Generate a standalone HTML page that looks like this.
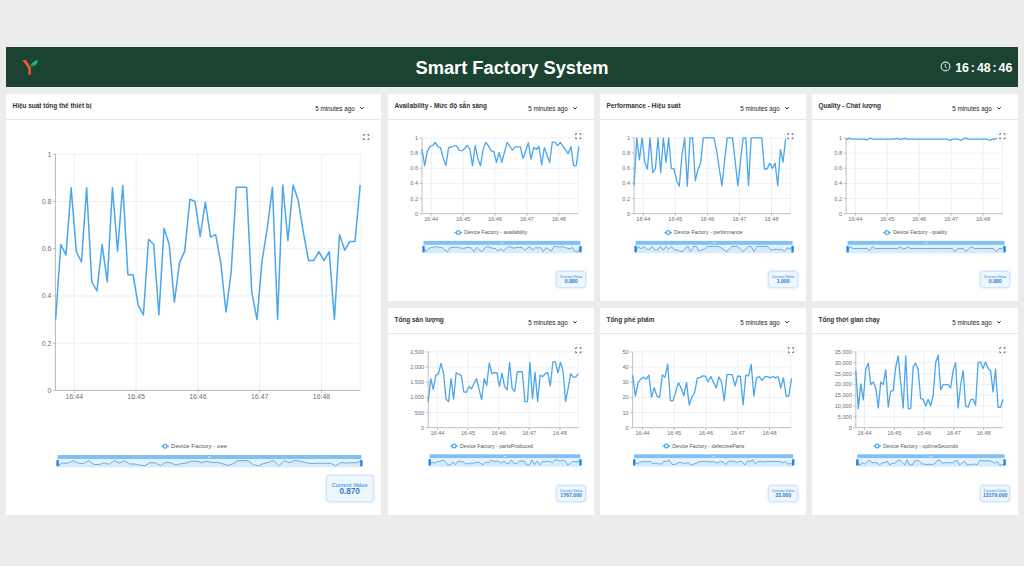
<!DOCTYPE html>
<html><head><meta charset="utf-8"><title>Smart Factory System</title>
<style>
*{box-sizing:border-box;margin:0;padding:0}
html,body{width:1024px;height:566px;overflow:hidden;background:#ececec;font-family:"Liberation Sans",sans-serif}
.hdr{position:absolute;left:6px;top:47px;width:1012px;height:39.6px;background:#1b4332}
.ttl{position:absolute;left:0;right:0;top:10.8px;text-align:center;color:#fff;font-weight:bold;font-size:18.3px;line-height:20px}
.clk{position:absolute;right:5.6px;top:13.5px;color:#fff;font-weight:bold;font-size:12.4px;line-height:14px}
.clk i{font-style:normal;margin:0 1.9px}
.pn{position:absolute;background:#fff}
.pt{position:absolute;left:6.5px;top:7.1px;font-size:6.45px;font-weight:bold;color:#2b3530;line-height:9px;white-space:nowrap}
.pr{position:absolute;right:26.3px;top:10.8px;font-size:6.3px;color:#222;line-height:8px;white-space:nowrap}
.dv{position:absolute;left:0;right:0;top:25px;height:0.7px;background:#e4e6e8}
.cv{position:absolute;border:1px solid #cfe4fb;background:#eef6fe;border-radius:4px;text-align:center;box-shadow:0 0 2.5px rgba(110,175,240,.45)}
.cv .a{color:#5aa3ec;white-space:nowrap;font-weight:bold}
.cv .b{color:#3478cf;font-weight:bold;white-space:nowrap}
svg{position:absolute;left:0;top:0}
</style></head><body>
<div class="hdr">
<svg width="30" height="30" viewBox="0 0 30 30" style="left:14px;top:10px">
<path d="M2.2,3.1 L5.9,3.1 C7.6,5.6 9.6,8.2 10.9,11.2 L10.9,17.2 C10.9,17.6 10.6,17.8 10.2,17.8 L9,17.8 C8.6,17.8 8.4,17.6 8.4,17.2 L8.4,12.2 C6.8,9.2 4.4,6.2 2.2,3.1 Z" fill="#f15a29"/>
<path d="M10.2,10.6 C10.8,6.6 13.6,3.9 17.9,3.0 C17.6,6.6 15.2,9.1 11.6,9.6 C12.6,8.4 13.6,7.4 14.8,6.6 C13.2,7.2 11.6,8.6 10.2,10.6 Z" fill="#1fbe6c"/>
</svg>
<div class="ttl">Smart Factory System</div>
<div class="clk"><svg width="11" height="11" viewBox="0 0 11 11" style="position:relative;display:inline-block;vertical-align:-1.5px;left:auto;top:auto;margin-right:4.5px;vertical-align:-0.9px"><circle cx="5.5" cy="5.5" r="4.4" fill="none" stroke="#d8dfdb" stroke-width="1.1"/><path d="M5.3,3 L5.3,5.8 L7,7.2" fill="none" stroke="#d8dfdb" stroke-width="1"/></svg>16<i>:</i>48<i>:</i>46</div>
</div>

<div class="pn" style="left:6px;top:94px;width:375px;height:421px"><div class="pt">Hiệu suất tổng thể thiết bị</div><div class="pr">5 minutes ago</div><svg width="6" height="5" viewBox="0 0 6 5" style="left:353.2px;top:12.4px"><path d="M1.2,1.2 L3,3 L4.8,1.2" fill="none" stroke="#3a3a3a" stroke-width="1"/></svg><div class="dv"></div></div>
<div class="pn" style="left:388px;top:94px;width:206px;height:207px"><div class="pt">Availability - Mức độ sẵn sàng</div><div class="pr">5 minutes ago</div><svg width="6" height="5" viewBox="0 0 6 5" style="left:184.2px;top:12.4px"><path d="M1.2,1.2 L3,3 L4.8,1.2" fill="none" stroke="#3a3a3a" stroke-width="1"/></svg><div class="dv"></div></div>
<div class="pn" style="left:600px;top:94px;width:206px;height:207px"><div class="pt">Performance - Hiệu suất</div><div class="pr">5 minutes ago</div><svg width="6" height="5" viewBox="0 0 6 5" style="left:184.2px;top:12.4px"><path d="M1.2,1.2 L3,3 L4.8,1.2" fill="none" stroke="#3a3a3a" stroke-width="1"/></svg><div class="dv"></div></div>
<div class="pn" style="left:812px;top:94px;width:206px;height:207px"><div class="pt">Quality - Chất lượng</div><div class="pr">5 minutes ago</div><svg width="6" height="5" viewBox="0 0 6 5" style="left:184.2px;top:12.4px"><path d="M1.2,1.2 L3,3 L4.8,1.2" fill="none" stroke="#3a3a3a" stroke-width="1"/></svg><div class="dv"></div></div>
<div class="pn" style="left:388px;top:308px;width:206px;height:207px"><div class="pt">Tổng sản lượng</div><div class="pr">5 minutes ago</div><svg width="6" height="5" viewBox="0 0 6 5" style="left:184.2px;top:12.4px"><path d="M1.2,1.2 L3,3 L4.8,1.2" fill="none" stroke="#3a3a3a" stroke-width="1"/></svg><div class="dv"></div></div>
<div class="pn" style="left:600px;top:308px;width:206px;height:207px"><div class="pt">Tổng phế phẩm</div><div class="pr">5 minutes ago</div><svg width="6" height="5" viewBox="0 0 6 5" style="left:184.2px;top:12.4px"><path d="M1.2,1.2 L3,3 L4.8,1.2" fill="none" stroke="#3a3a3a" stroke-width="1"/></svg><div class="dv"></div></div>
<div class="pn" style="left:812px;top:308px;width:206px;height:207px"><div class="pt">Tổng thời gian chạy</div><div class="pr">5 minutes ago</div><svg width="6" height="5" viewBox="0 0 6 5" style="left:184.2px;top:12.4px"><path d="M1.2,1.2 L3,3 L4.8,1.2" fill="none" stroke="#3a3a3a" stroke-width="1"/></svg><div class="dv"></div></div>
<div class="cv" style="left:325.7px;top:474.8px;width:47.9px;height:27.1px"><div class="a" style="font-size:5.5px;line-height:6px;margin-top:6.6px">Current Value</div><div class="b" style="font-size:8.2px;line-height:8px;margin-top:-0.2px">0.870</div></div>
<div class="cv" style="left:556.3px;top:270.6px;width:29.7px;height:17px"><div class="a" style="font-size:3.5px;line-height:4px;margin-top:3.3px">Current Value</div><div class="b" style="font-size:5.2px;line-height:5px;margin-top:0.3px">0.880</div></div>
<div class="cv" style="left:768.3px;top:270.6px;width:29.7px;height:17px"><div class="a" style="font-size:3.5px;line-height:4px;margin-top:3.3px">Current Value</div><div class="b" style="font-size:5.2px;line-height:5px;margin-top:0.3px">1.000</div></div>
<div class="cv" style="left:980.3px;top:270.6px;width:29.7px;height:17px"><div class="a" style="font-size:3.5px;line-height:4px;margin-top:3.3px">Current Value</div><div class="b" style="font-size:5.2px;line-height:5px;margin-top:0.3px">0.980</div></div>
<div class="cv" style="left:556.3px;top:484.6px;width:29.7px;height:17px"><div class="a" style="font-size:3.5px;line-height:4px;margin-top:3.3px">Current Value</div><div class="b" style="font-size:5.2px;line-height:5px;margin-top:0.3px">1767.000</div></div>
<div class="cv" style="left:768.3px;top:484.6px;width:29.7px;height:17px"><div class="a" style="font-size:3.5px;line-height:4px;margin-top:3.3px">Current Value</div><div class="b" style="font-size:5.2px;line-height:5px;margin-top:0.3px">33.000</div></div>
<div class="cv" style="left:980.3px;top:484.6px;width:29.7px;height:17px"><div class="a" style="font-size:3.5px;line-height:4px;margin-top:3.3px">Current Value</div><div class="b" style="font-size:5.2px;line-height:5px;margin-top:0.3px">13179.000</div></div>
<svg width="1024" height="566" viewBox="0 0 1024 566" font-family="Liberation Sans, sans-serif">
<line x1="52.9" y1="390.4" x2="55.4" y2="390.4" stroke="#9a9da4" stroke-width="0.6"/>
<text x="51.4" y="392.92" font-size="7" text-anchor="end" fill="#6e7079">0</text>
<line x1="55.4" y1="343.18" x2="360.2" y2="343.18" stroke="#e2e5ea" stroke-width="0.6"/>
<line x1="52.9" y1="343.18" x2="55.4" y2="343.18" stroke="#9a9da4" stroke-width="0.6"/>
<text x="51.4" y="345.7" font-size="7" text-anchor="end" fill="#6e7079">0.2</text>
<line x1="55.4" y1="295.96" x2="360.2" y2="295.96" stroke="#e2e5ea" stroke-width="0.6"/>
<line x1="52.9" y1="295.96" x2="55.4" y2="295.96" stroke="#9a9da4" stroke-width="0.6"/>
<text x="51.4" y="298.48" font-size="7" text-anchor="end" fill="#6e7079">0.4</text>
<line x1="55.4" y1="248.74" x2="360.2" y2="248.74" stroke="#e2e5ea" stroke-width="0.6"/>
<line x1="52.9" y1="248.74" x2="55.4" y2="248.74" stroke="#9a9da4" stroke-width="0.6"/>
<text x="51.4" y="251.26" font-size="7" text-anchor="end" fill="#6e7079">0.6</text>
<line x1="55.4" y1="201.52" x2="360.2" y2="201.52" stroke="#e2e5ea" stroke-width="0.6"/>
<line x1="52.9" y1="201.52" x2="55.4" y2="201.52" stroke="#9a9da4" stroke-width="0.6"/>
<text x="51.4" y="204.04" font-size="7" text-anchor="end" fill="#6e7079">0.8</text>
<line x1="55.4" y1="154.3" x2="360.2" y2="154.3" stroke="#e2e5ea" stroke-width="0.6"/>
<line x1="52.9" y1="154.3" x2="55.4" y2="154.3" stroke="#9a9da4" stroke-width="0.6"/>
<text x="51.4" y="156.82" font-size="7" text-anchor="end" fill="#6e7079">1</text>
<line x1="74.3" y1="154.3" x2="74.3" y2="390.4" stroke="#e2e5ea" stroke-width="0.6"/>
<line x1="74.3" y1="390.4" x2="74.3" y2="392.9" stroke="#9a9da4" stroke-width="0.6"/>
<text x="74.3" y="399" font-size="7" text-anchor="middle" fill="#6e7079">16:44</text>
<line x1="136.1" y1="154.3" x2="136.1" y2="390.4" stroke="#e2e5ea" stroke-width="0.6"/>
<line x1="136.1" y1="390.4" x2="136.1" y2="392.9" stroke="#9a9da4" stroke-width="0.6"/>
<text x="136.1" y="399" font-size="7" text-anchor="middle" fill="#6e7079">16:45</text>
<line x1="197.9" y1="154.3" x2="197.9" y2="390.4" stroke="#e2e5ea" stroke-width="0.6"/>
<line x1="197.9" y1="390.4" x2="197.9" y2="392.9" stroke="#9a9da4" stroke-width="0.6"/>
<text x="197.9" y="399" font-size="7" text-anchor="middle" fill="#6e7079">16:46</text>
<line x1="259.7" y1="154.3" x2="259.7" y2="390.4" stroke="#e2e5ea" stroke-width="0.6"/>
<line x1="259.7" y1="390.4" x2="259.7" y2="392.9" stroke="#9a9da4" stroke-width="0.6"/>
<text x="259.7" y="399" font-size="7" text-anchor="middle" fill="#6e7079">16:47</text>
<line x1="321.5" y1="154.3" x2="321.5" y2="390.4" stroke="#e2e5ea" stroke-width="0.6"/>
<line x1="321.5" y1="390.4" x2="321.5" y2="392.9" stroke="#9a9da4" stroke-width="0.6"/>
<text x="321.5" y="399" font-size="7" text-anchor="middle" fill="#6e7079">16:48</text>
<line x1="360.2" y1="154.3" x2="360.2" y2="390.4" stroke="#e2e5ea" stroke-width="0.6"/>
<line x1="55.4" y1="154.3" x2="55.4" y2="390.4" stroke="#9a9da4" stroke-width="0.75"/>
<line x1="55.4" y1="390.4" x2="360.2" y2="390.4" stroke="#9a9da4" stroke-width="0.75"/>
<polyline points="55.65,319.57 60.81,244.49 65.97,254.88 71.14,187.83 76.3,251.34 81.46,261.96 86.62,187.83 91.78,281.79 96.94,291 102.11,244.49 107.27,281.79 112.43,187.83 117.59,251.1 122.75,185.47 127.92,274.71 133.08,274.71 138.24,305.4 143.4,314.85 148.56,239.3 153.73,244.49 158.89,314.85 164.05,228.2 169.21,244.49 174.37,302.1 179.53,262.91 184.7,251.1 189.86,199.16 195.02,201.52 200.18,236.46 205.34,202.23 210.51,236.94 215.67,234.57 220.83,263.38 225.99,312.01 231.15,272.35 236.32,187.35 241.48,187.35 246.64,187.35 251.8,292.42 256.96,319.57 262.12,260.54 267.29,228.2 272.45,187.35 277.61,319.57 282.77,184.99 287.93,240.71 293.1,184.99 298.26,200.58 303.42,232.69 308.58,260.54 313.74,260.54 318.91,251.57 324.07,260.54 329.23,251.57 334.39,319.57 339.55,234.57 344.71,250.16 349.88,241.42 355.04,241.42 360.2,184.99" fill="none" stroke="#4aa6ee" stroke-width="1.5" stroke-linejoin="round"/>
<circle cx="366.2" cy="136.9" r="5.6" fill="#fff" stroke="#e8ebef" stroke-width="0.7"/>
<path d="M363.6,136.1 L363.6,134.6 L365.1,134.6" fill="none" stroke="#555" stroke-width="0.85"/>
<path d="M363.6,138.1 L363.6,139.6 L365.1,139.6" fill="none" stroke="#555" stroke-width="0.85"/>
<path d="M368.8,136.1 L368.8,134.6 L367.3,134.6" fill="none" stroke="#555" stroke-width="0.85"/>
<path d="M368.8,138.1 L368.8,139.6 L367.3,139.6" fill="none" stroke="#555" stroke-width="0.85"/>
<line x1="161.3" y1="446.2" x2="168.9" y2="446.2" stroke="#4aa6ee" stroke-width="1.3"/>
<circle cx="165.1" cy="446.2" r="1.9" fill="#fff" stroke="#4aa6ee" stroke-width="1.2"/>
<text x="171" y="448.4" font-size="6.1" fill="#555">Device Factory - oee</text>
<rect x="57.6" y="455" width="303.8" height="4" fill="#80c0f5"/>
<rect x="57.6" y="459" width="303.8" height="8.3" fill="#e4f2fd"/>
<polygon points="57.6,467.3 57.6,465.74 62.75,462.85 67.9,463.25 73.05,460.67 78.2,463.11 83.35,463.52 88.49,460.67 93.64,464.29 98.79,464.64 103.94,462.85 109.09,464.29 114.24,460.67 119.39,463.1 124.54,460.57 129.69,464.01 134.84,464.01 139.99,465.2 145.14,465.56 150.28,462.65 155.43,462.85 160.58,465.56 165.73,462.22 170.88,462.85 176.03,465.07 181.18,463.56 186.33,463.1 191.48,461.1 196.63,461.19 201.78,462.54 206.93,461.22 212.07,462.56 217.22,462.47 222.37,463.58 227.52,465.45 232.67,463.92 237.82,460.65 242.97,460.65 248.12,460.65 253.27,464.7 258.42,465.74 263.57,463.47 268.72,462.22 273.86,460.65 279.01,465.74 284.16,460.56 289.31,462.7 294.46,460.56 299.61,461.16 304.76,462.39 309.91,463.47 315.06,463.47 320.21,463.12 325.36,463.47 330.51,463.12 335.65,465.74 340.8,462.47 345.95,463.07 351.1,462.73 356.25,462.73 361.4,460.56 361.4,467.3" fill="#d6ebfb"/>
<polyline points="57.6,465.74 62.75,462.85 67.9,463.25 73.05,460.67 78.2,463.11 83.35,463.52 88.49,460.67 93.64,464.29 98.79,464.64 103.94,462.85 109.09,464.29 114.24,460.67 119.39,463.1 124.54,460.57 129.69,464.01 134.84,464.01 139.99,465.2 145.14,465.56 150.28,462.65 155.43,462.85 160.58,465.56 165.73,462.22 170.88,462.85 176.03,465.07 181.18,463.56 186.33,463.1 191.48,461.1 196.63,461.19 201.78,462.54 206.93,461.22 212.07,462.56 217.22,462.47 222.37,463.58 227.52,465.45 232.67,463.92 237.82,460.65 242.97,460.65 248.12,460.65 253.27,464.7 258.42,465.74 263.57,463.47 268.72,462.22 273.86,460.65 279.01,465.74 284.16,460.56 289.31,462.7 294.46,460.56 299.61,461.16 304.76,462.39 309.91,463.47 315.06,463.47 320.21,463.12 325.36,463.47 330.51,463.12 335.65,465.74 340.8,462.47 345.95,463.07 351.1,462.73 356.25,462.73 361.4,460.56" fill="none" stroke="#5ea3e2" stroke-width="0.9"/>
<rect x="56.4" y="459.8" width="2.4" height="6.7" rx="1.2" fill="#1e88e5"/>
<rect x="360.2" y="459.8" width="2.4" height="6.7" rx="1.2" fill="#1e88e5"/>
<rect x="208" y="456.6" width="3" height="0.8" fill="#e8f3fd"/>
<line x1="419.5" y1="213.7" x2="422" y2="213.7" stroke="#9a9da4" stroke-width="0.6"/>
<text x="418" y="215.72" font-size="5.6" text-anchor="end" fill="#6e7079">0</text>
<line x1="422" y1="198.54" x2="578.3" y2="198.54" stroke="#e2e5ea" stroke-width="0.6"/>
<line x1="419.5" y1="198.54" x2="422" y2="198.54" stroke="#9a9da4" stroke-width="0.6"/>
<text x="418" y="200.56" font-size="5.6" text-anchor="end" fill="#6e7079">0.2</text>
<line x1="422" y1="183.38" x2="578.3" y2="183.38" stroke="#e2e5ea" stroke-width="0.6"/>
<line x1="419.5" y1="183.38" x2="422" y2="183.38" stroke="#9a9da4" stroke-width="0.6"/>
<text x="418" y="185.4" font-size="5.6" text-anchor="end" fill="#6e7079">0.4</text>
<line x1="422" y1="168.22" x2="578.3" y2="168.22" stroke="#e2e5ea" stroke-width="0.6"/>
<line x1="419.5" y1="168.22" x2="422" y2="168.22" stroke="#9a9da4" stroke-width="0.6"/>
<text x="418" y="170.24" font-size="5.6" text-anchor="end" fill="#6e7079">0.6</text>
<line x1="422" y1="153.06" x2="578.3" y2="153.06" stroke="#e2e5ea" stroke-width="0.6"/>
<line x1="419.5" y1="153.06" x2="422" y2="153.06" stroke="#9a9da4" stroke-width="0.6"/>
<text x="418" y="155.08" font-size="5.6" text-anchor="end" fill="#6e7079">0.8</text>
<line x1="422" y1="137.9" x2="578.3" y2="137.9" stroke="#e2e5ea" stroke-width="0.6"/>
<line x1="419.5" y1="137.9" x2="422" y2="137.9" stroke="#9a9da4" stroke-width="0.6"/>
<text x="418" y="139.92" font-size="5.6" text-anchor="end" fill="#6e7079">1</text>
<line x1="431.2" y1="137.9" x2="431.2" y2="213.7" stroke="#e2e5ea" stroke-width="0.6"/>
<line x1="431.2" y1="213.7" x2="431.2" y2="216.2" stroke="#9a9da4" stroke-width="0.6"/>
<text x="431.2" y="220.9" font-size="5.6" text-anchor="middle" fill="#6e7079">16:44</text>
<line x1="463.12" y1="137.9" x2="463.12" y2="213.7" stroke="#e2e5ea" stroke-width="0.6"/>
<line x1="463.12" y1="213.7" x2="463.12" y2="216.2" stroke="#9a9da4" stroke-width="0.6"/>
<text x="463.12" y="220.9" font-size="5.6" text-anchor="middle" fill="#6e7079">16:45</text>
<line x1="495.05" y1="137.9" x2="495.05" y2="213.7" stroke="#e2e5ea" stroke-width="0.6"/>
<line x1="495.05" y1="213.7" x2="495.05" y2="216.2" stroke="#9a9da4" stroke-width="0.6"/>
<text x="495.05" y="220.9" font-size="5.6" text-anchor="middle" fill="#6e7079">16:46</text>
<line x1="526.98" y1="137.9" x2="526.98" y2="213.7" stroke="#e2e5ea" stroke-width="0.6"/>
<line x1="526.98" y1="213.7" x2="526.98" y2="216.2" stroke="#9a9da4" stroke-width="0.6"/>
<text x="526.98" y="220.9" font-size="5.6" text-anchor="middle" fill="#6e7079">16:47</text>
<line x1="558.9" y1="137.9" x2="558.9" y2="213.7" stroke="#e2e5ea" stroke-width="0.6"/>
<line x1="558.9" y1="213.7" x2="558.9" y2="216.2" stroke="#9a9da4" stroke-width="0.6"/>
<text x="558.9" y="220.9" font-size="5.6" text-anchor="middle" fill="#6e7079">16:48</text>
<line x1="578.3" y1="137.9" x2="578.3" y2="213.7" stroke="#e2e5ea" stroke-width="0.6"/>
<line x1="422" y1="137.9" x2="422" y2="213.7" stroke="#9a9da4" stroke-width="0.65"/>
<line x1="422" y1="213.7" x2="578.3" y2="213.7" stroke="#9a9da4" stroke-width="0.65"/>
<polyline points="422,149.12 424.66,165.57 427.32,151.17 429.98,146.69 432.64,145.48 435.3,142.45 437.96,146.69 440.62,147.75 443.27,158.37 445.93,165.57 448.59,147.53 451.25,147 453.91,145.78 456.57,145.93 459.23,150.33 461.89,150.56 464.55,148.74 467.21,145.48 469.87,149.12 472.53,165.79 475.19,145.48 477.85,158.75 480.51,165.79 483.16,149.12 485.82,142.45 488.48,145.93 491.14,150.79 493.8,151.7 496.46,162.38 499.12,152.3 501.78,162.38 504.44,152.3 507.1,142.3 509.76,146.24 512.42,150.18 515.08,146.84 517.74,146.84 520.39,146.84 523.05,158.52 525.71,150.79 528.37,142.75 531.03,159.35 533.69,147.3 536.35,149.5 539.01,146.47 541.67,165.19 544.33,147.53 546.99,155.03 549.65,162.46 552.31,142.14 554.97,142.3 557.63,145.63 560.28,142.45 562.94,146.24 565.6,149.8 568.26,153.51 570.92,146.47 573.58,165.57 576.24,165.57 578.9,146.47" fill="none" stroke="#4aa6ee" stroke-width="1.3" stroke-linejoin="round"/>
<circle cx="578.3" cy="136" r="5.6" fill="#fff" stroke="#e8ebef" stroke-width="0.7"/>
<path d="M575.7,135.2 L575.7,133.7 L577.2,133.7" fill="none" stroke="#555" stroke-width="0.85"/>
<path d="M575.7,137.2 L575.7,138.7 L577.2,138.7" fill="none" stroke="#555" stroke-width="0.85"/>
<path d="M580.9,135.2 L580.9,133.7 L579.4,133.7" fill="none" stroke="#555" stroke-width="0.85"/>
<path d="M580.9,137.2 L580.9,138.7 L579.4,138.7" fill="none" stroke="#555" stroke-width="0.85"/>
<line x1="454.5" y1="232.6" x2="462.1" y2="232.6" stroke="#4aa6ee" stroke-width="1.3"/>
<circle cx="458.3" cy="232.6" r="1.9" fill="#fff" stroke="#4aa6ee" stroke-width="1.2"/>
<text x="464.2" y="234.47" font-size="5.2" fill="#555">Device Factory - availability</text>
<rect x="423.5" y="240.9" width="157" height="4" fill="#80c0f5"/>
<rect x="423.5" y="244.9" width="157" height="8.3" fill="#e4f2fd"/>
<polygon points="423.5,253.2 423.5,247.99 426.16,251.59 428.82,248.43 431.48,247.45 434.14,247.19 436.81,246.52 439.47,247.45 442.13,247.69 444.79,250.01 447.45,251.59 450.11,247.64 452.77,247.52 455.43,247.25 458.09,247.29 460.75,248.25 463.42,248.3 466.08,247.9 468.74,247.19 471.4,247.99 474.06,251.64 476.72,247.19 479.38,250.1 482.04,251.64 484.7,247.99 487.36,246.52 490.03,247.29 492.69,248.35 495.35,248.55 498.01,250.9 500.67,248.68 503.33,250.9 505.99,248.68 508.65,246.49 511.31,247.35 513.97,248.22 516.64,247.49 519.3,247.49 521.96,247.49 524.62,250.05 527.28,248.35 529.94,246.59 532.6,250.23 535.26,247.59 537.92,248.07 540.58,247.4 543.25,251.51 545.91,247.64 548.57,249.28 551.23,250.91 553.89,246.46 556.55,246.49 559.21,247.22 561.87,246.52 564.53,247.35 567.19,248.14 569.86,248.95 572.52,247.4 575.18,251.59 577.84,251.59 580.5,247.4 580.5,253.2" fill="#d6ebfb"/>
<polyline points="423.5,247.99 426.16,251.59 428.82,248.43 431.48,247.45 434.14,247.19 436.81,246.52 439.47,247.45 442.13,247.69 444.79,250.01 447.45,251.59 450.11,247.64 452.77,247.52 455.43,247.25 458.09,247.29 460.75,248.25 463.42,248.3 466.08,247.9 468.74,247.19 471.4,247.99 474.06,251.64 476.72,247.19 479.38,250.1 482.04,251.64 484.7,247.99 487.36,246.52 490.03,247.29 492.69,248.35 495.35,248.55 498.01,250.9 500.67,248.68 503.33,250.9 505.99,248.68 508.65,246.49 511.31,247.35 513.97,248.22 516.64,247.49 519.3,247.49 521.96,247.49 524.62,250.05 527.28,248.35 529.94,246.59 532.6,250.23 535.26,247.59 537.92,248.07 540.58,247.4 543.25,251.51 545.91,247.64 548.57,249.28 551.23,250.91 553.89,246.46 556.55,246.49 559.21,247.22 561.87,246.52 564.53,247.35 567.19,248.14 569.86,248.95 572.52,247.4 575.18,251.59 577.84,251.59 580.5,247.4" fill="none" stroke="#5ea3e2" stroke-width="0.9"/>
<rect x="422.3" y="245.7" width="2.4" height="6.7" rx="1.2" fill="#1e88e5"/>
<rect x="579.3" y="245.7" width="2.4" height="6.7" rx="1.2" fill="#1e88e5"/>
<rect x="500.5" y="242.5" width="3" height="0.8" fill="#e8f3fd"/>
<line x1="631.6" y1="213.7" x2="634.1" y2="213.7" stroke="#9a9da4" stroke-width="0.6"/>
<text x="630.1" y="215.72" font-size="5.6" text-anchor="end" fill="#6e7079">0</text>
<line x1="634.1" y1="198.54" x2="790.4" y2="198.54" stroke="#e2e5ea" stroke-width="0.6"/>
<line x1="631.6" y1="198.54" x2="634.1" y2="198.54" stroke="#9a9da4" stroke-width="0.6"/>
<text x="630.1" y="200.56" font-size="5.6" text-anchor="end" fill="#6e7079">0.2</text>
<line x1="634.1" y1="183.38" x2="790.4" y2="183.38" stroke="#e2e5ea" stroke-width="0.6"/>
<line x1="631.6" y1="183.38" x2="634.1" y2="183.38" stroke="#9a9da4" stroke-width="0.6"/>
<text x="630.1" y="185.4" font-size="5.6" text-anchor="end" fill="#6e7079">0.4</text>
<line x1="634.1" y1="168.22" x2="790.4" y2="168.22" stroke="#e2e5ea" stroke-width="0.6"/>
<line x1="631.6" y1="168.22" x2="634.1" y2="168.22" stroke="#9a9da4" stroke-width="0.6"/>
<text x="630.1" y="170.24" font-size="5.6" text-anchor="end" fill="#6e7079">0.6</text>
<line x1="634.1" y1="153.06" x2="790.4" y2="153.06" stroke="#e2e5ea" stroke-width="0.6"/>
<line x1="631.6" y1="153.06" x2="634.1" y2="153.06" stroke="#9a9da4" stroke-width="0.6"/>
<text x="630.1" y="155.08" font-size="5.6" text-anchor="end" fill="#6e7079">0.8</text>
<line x1="634.1" y1="137.9" x2="790.4" y2="137.9" stroke="#e2e5ea" stroke-width="0.6"/>
<line x1="631.6" y1="137.9" x2="634.1" y2="137.9" stroke="#9a9da4" stroke-width="0.6"/>
<text x="630.1" y="139.92" font-size="5.6" text-anchor="end" fill="#6e7079">1</text>
<line x1="643.3" y1="137.9" x2="643.3" y2="213.7" stroke="#e2e5ea" stroke-width="0.6"/>
<line x1="643.3" y1="213.7" x2="643.3" y2="216.2" stroke="#9a9da4" stroke-width="0.6"/>
<text x="643.3" y="220.9" font-size="5.6" text-anchor="middle" fill="#6e7079">16:44</text>
<line x1="675.35" y1="137.9" x2="675.35" y2="213.7" stroke="#e2e5ea" stroke-width="0.6"/>
<line x1="675.35" y1="213.7" x2="675.35" y2="216.2" stroke="#9a9da4" stroke-width="0.6"/>
<text x="675.35" y="220.9" font-size="5.6" text-anchor="middle" fill="#6e7079">16:45</text>
<line x1="707.4" y1="137.9" x2="707.4" y2="213.7" stroke="#e2e5ea" stroke-width="0.6"/>
<line x1="707.4" y1="213.7" x2="707.4" y2="216.2" stroke="#9a9da4" stroke-width="0.6"/>
<text x="707.4" y="220.9" font-size="5.6" text-anchor="middle" fill="#6e7079">16:46</text>
<line x1="739.45" y1="137.9" x2="739.45" y2="213.7" stroke="#e2e5ea" stroke-width="0.6"/>
<line x1="739.45" y1="213.7" x2="739.45" y2="216.2" stroke="#9a9da4" stroke-width="0.6"/>
<text x="739.45" y="220.9" font-size="5.6" text-anchor="middle" fill="#6e7079">16:47</text>
<line x1="771.5" y1="137.9" x2="771.5" y2="213.7" stroke="#e2e5ea" stroke-width="0.6"/>
<line x1="771.5" y1="213.7" x2="771.5" y2="216.2" stroke="#9a9da4" stroke-width="0.6"/>
<text x="771.5" y="220.9" font-size="5.6" text-anchor="middle" fill="#6e7079">16:48</text>
<line x1="790.4" y1="137.9" x2="790.4" y2="213.7" stroke="#e2e5ea" stroke-width="0.6"/>
<line x1="634.1" y1="137.9" x2="634.1" y2="213.7" stroke="#9a9da4" stroke-width="0.65"/>
<line x1="634.1" y1="213.7" x2="790.4" y2="213.7" stroke="#9a9da4" stroke-width="0.65"/>
<polyline points="634.1,185.58 636.76,137.9 639.42,159.88 642.08,137.9 644.74,162 647.4,168.98 650.06,137.9 652.72,172.69 655.38,168.98 658.04,137.9 660.7,172.69 663.36,137.9 666.02,162.53 668.68,137.9 671.34,168.45 674,168.98 676.66,180.73 679.32,186.11 681.98,155.03 684.64,137.9 687.3,186.11 689.96,137.9 692.62,137.9 695.28,180.73 697.94,169.51 700.6,163.07 703.26,137.9 705.92,137.9 708.58,137.9 711.24,137.9 713.9,137.9 716.56,150.03 719.22,168.22 721.88,185.65 724.54,161.4 727.2,137.9 729.86,137.9 732.52,137.9 735.18,161.4 737.84,185.65 740.5,161.4 743.16,137.9 745.82,137.9 748.48,185.65 751.14,137.9 753.8,137.9 756.46,137.9 759.12,137.9 761.78,137.9 764.44,168.98 767.1,168.98 769.76,163.07 772.42,168.45 775.08,163.07 777.74,185.58 780.4,149.65 783.06,162 785.72,137.9" fill="none" stroke="#4aa6ee" stroke-width="1.3" stroke-linejoin="round"/>
<circle cx="790.4" cy="136" r="5.6" fill="#fff" stroke="#e8ebef" stroke-width="0.7"/>
<path d="M787.8,135.2 L787.8,133.7 L789.3,133.7" fill="none" stroke="#555" stroke-width="0.85"/>
<path d="M787.8,137.2 L787.8,138.7 L789.3,138.7" fill="none" stroke="#555" stroke-width="0.85"/>
<path d="M793,135.2 L793,133.7 L791.5,133.7" fill="none" stroke="#555" stroke-width="0.85"/>
<path d="M793,137.2 L793,138.7 L791.5,138.7" fill="none" stroke="#555" stroke-width="0.85"/>
<line x1="664.4" y1="232.6" x2="672" y2="232.6" stroke="#4aa6ee" stroke-width="1.3"/>
<circle cx="668.2" cy="232.6" r="1.9" fill="#fff" stroke="#4aa6ee" stroke-width="1.2"/>
<text x="674.1" y="234.47" font-size="5.2" fill="#555">Device Factory - performance</text>
<rect x="635.6" y="240.9" width="157" height="4" fill="#80c0f5"/>
<rect x="635.6" y="244.9" width="157" height="8.3" fill="#e4f2fd"/>
<polygon points="635.6,253.2 635.6,251.59 638.35,246.46 641.11,248.82 643.86,246.46 646.62,249.05 649.37,249.8 652.13,246.46 654.88,250.2 657.64,249.8 660.39,246.46 663.14,250.2 665.9,246.46 668.65,249.11 671.41,246.46 674.16,249.74 676.92,249.8 679.67,251.06 682.42,251.64 685.18,248.3 687.93,246.46 690.69,251.64 693.44,246.46 696.2,246.46 698.95,251.06 701.71,249.86 704.46,249.16 707.21,246.46 709.97,246.46 712.72,246.46 715.48,246.46 718.23,246.46 720.99,247.76 723.74,249.72 726.49,251.59 729.25,248.98 732,246.46 734.76,246.46 737.51,246.46 740.27,248.98 743.02,251.59 745.78,248.98 748.53,246.46 751.28,246.46 754.04,251.59 756.79,246.46 759.55,246.46 762.3,246.46 765.06,246.46 767.81,246.46 770.56,249.8 773.32,249.8 776.07,249.16 778.83,249.74 781.58,249.16 784.34,251.59 787.09,247.72 789.85,249.05 792.6,246.46 792.6,253.2" fill="#d6ebfb"/>
<polyline points="635.6,251.59 638.35,246.46 641.11,248.82 643.86,246.46 646.62,249.05 649.37,249.8 652.13,246.46 654.88,250.2 657.64,249.8 660.39,246.46 663.14,250.2 665.9,246.46 668.65,249.11 671.41,246.46 674.16,249.74 676.92,249.8 679.67,251.06 682.42,251.64 685.18,248.3 687.93,246.46 690.69,251.64 693.44,246.46 696.2,246.46 698.95,251.06 701.71,249.86 704.46,249.16 707.21,246.46 709.97,246.46 712.72,246.46 715.48,246.46 718.23,246.46 720.99,247.76 723.74,249.72 726.49,251.59 729.25,248.98 732,246.46 734.76,246.46 737.51,246.46 740.27,248.98 743.02,251.59 745.78,248.98 748.53,246.46 751.28,246.46 754.04,251.59 756.79,246.46 759.55,246.46 762.3,246.46 765.06,246.46 767.81,246.46 770.56,249.8 773.32,249.8 776.07,249.16 778.83,249.74 781.58,249.16 784.34,251.59 787.09,247.72 789.85,249.05 792.6,246.46" fill="none" stroke="#5ea3e2" stroke-width="0.9"/>
<rect x="634.4" y="245.7" width="2.4" height="6.7" rx="1.2" fill="#1e88e5"/>
<rect x="791.4" y="245.7" width="2.4" height="6.7" rx="1.2" fill="#1e88e5"/>
<rect x="712.6" y="242.5" width="3" height="0.8" fill="#e8f3fd"/>
<line x1="843.6" y1="213.7" x2="846.1" y2="213.7" stroke="#9a9da4" stroke-width="0.6"/>
<text x="842.1" y="215.72" font-size="5.6" text-anchor="end" fill="#6e7079">0</text>
<line x1="846.1" y1="198.54" x2="1002.4" y2="198.54" stroke="#e2e5ea" stroke-width="0.6"/>
<line x1="843.6" y1="198.54" x2="846.1" y2="198.54" stroke="#9a9da4" stroke-width="0.6"/>
<text x="842.1" y="200.56" font-size="5.6" text-anchor="end" fill="#6e7079">0.2</text>
<line x1="846.1" y1="183.38" x2="1002.4" y2="183.38" stroke="#e2e5ea" stroke-width="0.6"/>
<line x1="843.6" y1="183.38" x2="846.1" y2="183.38" stroke="#9a9da4" stroke-width="0.6"/>
<text x="842.1" y="185.4" font-size="5.6" text-anchor="end" fill="#6e7079">0.4</text>
<line x1="846.1" y1="168.22" x2="1002.4" y2="168.22" stroke="#e2e5ea" stroke-width="0.6"/>
<line x1="843.6" y1="168.22" x2="846.1" y2="168.22" stroke="#9a9da4" stroke-width="0.6"/>
<text x="842.1" y="170.24" font-size="5.6" text-anchor="end" fill="#6e7079">0.6</text>
<line x1="846.1" y1="153.06" x2="1002.4" y2="153.06" stroke="#e2e5ea" stroke-width="0.6"/>
<line x1="843.6" y1="153.06" x2="846.1" y2="153.06" stroke="#9a9da4" stroke-width="0.6"/>
<text x="842.1" y="155.08" font-size="5.6" text-anchor="end" fill="#6e7079">0.8</text>
<line x1="846.1" y1="137.9" x2="1002.4" y2="137.9" stroke="#e2e5ea" stroke-width="0.6"/>
<line x1="843.6" y1="137.9" x2="846.1" y2="137.9" stroke="#9a9da4" stroke-width="0.6"/>
<text x="842.1" y="139.92" font-size="5.6" text-anchor="end" fill="#6e7079">1</text>
<line x1="855.3" y1="137.9" x2="855.3" y2="213.7" stroke="#e2e5ea" stroke-width="0.6"/>
<line x1="855.3" y1="213.7" x2="855.3" y2="216.2" stroke="#9a9da4" stroke-width="0.6"/>
<text x="855.3" y="220.9" font-size="5.6" text-anchor="middle" fill="#6e7079">16:44</text>
<line x1="887.25" y1="137.9" x2="887.25" y2="213.7" stroke="#e2e5ea" stroke-width="0.6"/>
<line x1="887.25" y1="213.7" x2="887.25" y2="216.2" stroke="#9a9da4" stroke-width="0.6"/>
<text x="887.25" y="220.9" font-size="5.6" text-anchor="middle" fill="#6e7079">16:45</text>
<line x1="919.2" y1="137.9" x2="919.2" y2="213.7" stroke="#e2e5ea" stroke-width="0.6"/>
<line x1="919.2" y1="213.7" x2="919.2" y2="216.2" stroke="#9a9da4" stroke-width="0.6"/>
<text x="919.2" y="220.9" font-size="5.6" text-anchor="middle" fill="#6e7079">16:46</text>
<line x1="951.15" y1="137.9" x2="951.15" y2="213.7" stroke="#e2e5ea" stroke-width="0.6"/>
<line x1="951.15" y1="213.7" x2="951.15" y2="216.2" stroke="#9a9da4" stroke-width="0.6"/>
<text x="951.15" y="220.9" font-size="5.6" text-anchor="middle" fill="#6e7079">16:47</text>
<line x1="983.1" y1="137.9" x2="983.1" y2="213.7" stroke="#e2e5ea" stroke-width="0.6"/>
<line x1="983.1" y1="213.7" x2="983.1" y2="216.2" stroke="#9a9da4" stroke-width="0.6"/>
<text x="983.1" y="220.9" font-size="5.6" text-anchor="middle" fill="#6e7079">16:48</text>
<line x1="1002.4" y1="137.9" x2="1002.4" y2="213.7" stroke="#e2e5ea" stroke-width="0.6"/>
<line x1="846.1" y1="137.9" x2="846.1" y2="213.7" stroke="#9a9da4" stroke-width="0.65"/>
<line x1="846.1" y1="213.7" x2="1002.4" y2="213.7" stroke="#9a9da4" stroke-width="0.65"/>
<polyline points="846.1,139.95 848.76,138.05 851.42,139.04 854.08,139.04 856.74,139.04 859.4,139.04 862.06,139.04 864.72,139.04 867.38,139.95 870.04,138.05 872.7,139.04 875.36,139.04 878.02,139.04 880.68,139.04 883.34,139.04 886,139.04 888.66,139.04 891.32,139.04 893.98,139.04 896.64,138.28 899.3,139.26 901.96,139.04 904.62,138.28 907.28,139.04 909.94,139.04 912.6,139.04 915.26,139.04 917.92,139.04 920.58,139.04 923.24,139.04 925.9,139.04 928.56,139.04 931.22,139.04 933.88,139.04 936.54,139.04 939.2,139.04 941.86,139.04 944.52,139.04 947.18,139.04 949.84,140.55 952.5,139.04 955.16,139.04 957.82,139.04 960.48,140.55 963.14,139.04 965.8,138.2 968.46,139.04 971.12,139.04 973.78,139.04 976.44,139.04 979.1,139.04 981.76,139.04 984.42,139.04 987.08,139.04 989.74,140.55 992.4,139.04 995.06,139.04 997.72,138.2" fill="none" stroke="#4aa6ee" stroke-width="1.3" stroke-linejoin="round"/>
<circle cx="1002.4" cy="136" r="5.6" fill="#fff" stroke="#e8ebef" stroke-width="0.7"/>
<path d="M999.8,135.2 L999.8,133.7 L1001.3,133.7" fill="none" stroke="#555" stroke-width="0.85"/>
<path d="M999.8,137.2 L999.8,138.7 L1001.3,138.7" fill="none" stroke="#555" stroke-width="0.85"/>
<path d="M1005,135.2 L1005,133.7 L1003.5,133.7" fill="none" stroke="#555" stroke-width="0.85"/>
<path d="M1005,137.2 L1005,138.7 L1003.5,138.7" fill="none" stroke="#555" stroke-width="0.85"/>
<line x1="883.2" y1="232.6" x2="890.8" y2="232.6" stroke="#4aa6ee" stroke-width="1.3"/>
<circle cx="887" cy="232.6" r="1.9" fill="#fff" stroke="#4aa6ee" stroke-width="1.2"/>
<text x="892.9" y="234.47" font-size="5.2" fill="#555">Device Factory - quality</text>
<rect x="847.6" y="240.9" width="157" height="4" fill="#80c0f5"/>
<rect x="847.6" y="244.9" width="157" height="8.3" fill="#e4f2fd"/>
<polygon points="847.6,253.2 847.6,250.39 850.35,246.46 853.11,248.5 855.86,248.5 858.62,248.5 861.37,248.5 864.13,248.5 866.88,248.5 869.64,250.39 872.39,246.46 875.14,248.5 877.9,248.5 880.65,248.5 883.41,248.5 886.16,248.5 888.92,248.5 891.67,248.5 894.42,248.5 897.18,248.5 899.93,246.93 902.69,248.97 905.44,248.5 908.2,246.93 910.95,248.5 913.71,248.5 916.46,248.5 919.21,248.5 921.97,248.5 924.72,248.5 927.48,248.5 930.23,248.5 932.99,248.5 935.74,248.5 938.49,248.5 941.25,248.5 944,248.5 946.76,248.5 949.51,248.5 952.27,248.5 955.02,251.64 957.78,248.5 960.53,248.5 963.28,248.5 966.04,251.64 968.79,248.5 971.55,246.77 974.3,248.5 977.06,248.5 979.81,248.5 982.56,248.5 985.32,248.5 988.07,248.5 990.83,248.5 993.58,248.5 996.34,251.64 999.09,248.5 1001.85,248.5 1004.6,246.77 1004.6,253.2" fill="#d6ebfb"/>
<polyline points="847.6,250.39 850.35,246.46 853.11,248.5 855.86,248.5 858.62,248.5 861.37,248.5 864.13,248.5 866.88,248.5 869.64,250.39 872.39,246.46 875.14,248.5 877.9,248.5 880.65,248.5 883.41,248.5 886.16,248.5 888.92,248.5 891.67,248.5 894.42,248.5 897.18,248.5 899.93,246.93 902.69,248.97 905.44,248.5 908.2,246.93 910.95,248.5 913.71,248.5 916.46,248.5 919.21,248.5 921.97,248.5 924.72,248.5 927.48,248.5 930.23,248.5 932.99,248.5 935.74,248.5 938.49,248.5 941.25,248.5 944,248.5 946.76,248.5 949.51,248.5 952.27,248.5 955.02,251.64 957.78,248.5 960.53,248.5 963.28,248.5 966.04,251.64 968.79,248.5 971.55,246.77 974.3,248.5 977.06,248.5 979.81,248.5 982.56,248.5 985.32,248.5 988.07,248.5 990.83,248.5 993.58,248.5 996.34,251.64 999.09,248.5 1001.85,248.5 1004.6,246.77" fill="none" stroke="#5ea3e2" stroke-width="0.9"/>
<rect x="846.4" y="245.7" width="2.4" height="6.7" rx="1.2" fill="#1e88e5"/>
<rect x="1003.4" y="245.7" width="2.4" height="6.7" rx="1.2" fill="#1e88e5"/>
<rect x="924.6" y="242.5" width="3" height="0.8" fill="#e8f3fd"/>
<line x1="425.7" y1="427.7" x2="428.2" y2="427.7" stroke="#9a9da4" stroke-width="0.6"/>
<text x="424.2" y="429.72" font-size="5.6" text-anchor="end" fill="#6e7079">0</text>
<line x1="428.2" y1="412.54" x2="578.3" y2="412.54" stroke="#e2e5ea" stroke-width="0.6"/>
<line x1="425.7" y1="412.54" x2="428.2" y2="412.54" stroke="#9a9da4" stroke-width="0.6"/>
<text x="424.2" y="414.56" font-size="5.6" text-anchor="end" fill="#6e7079">500</text>
<line x1="428.2" y1="397.38" x2="578.3" y2="397.38" stroke="#e2e5ea" stroke-width="0.6"/>
<line x1="425.7" y1="397.38" x2="428.2" y2="397.38" stroke="#9a9da4" stroke-width="0.6"/>
<text x="424.2" y="399.4" font-size="5.6" text-anchor="end" fill="#6e7079">1,000</text>
<line x1="428.2" y1="382.22" x2="578.3" y2="382.22" stroke="#e2e5ea" stroke-width="0.6"/>
<line x1="425.7" y1="382.22" x2="428.2" y2="382.22" stroke="#9a9da4" stroke-width="0.6"/>
<text x="424.2" y="384.24" font-size="5.6" text-anchor="end" fill="#6e7079">1,500</text>
<line x1="428.2" y1="367.06" x2="578.3" y2="367.06" stroke="#e2e5ea" stroke-width="0.6"/>
<line x1="425.7" y1="367.06" x2="428.2" y2="367.06" stroke="#9a9da4" stroke-width="0.6"/>
<text x="424.2" y="369.08" font-size="5.6" text-anchor="end" fill="#6e7079">2,000</text>
<line x1="428.2" y1="351.9" x2="578.3" y2="351.9" stroke="#e2e5ea" stroke-width="0.6"/>
<line x1="425.7" y1="351.9" x2="428.2" y2="351.9" stroke="#9a9da4" stroke-width="0.6"/>
<text x="424.2" y="353.92" font-size="5.6" text-anchor="end" fill="#6e7079">2,500</text>
<line x1="437.4" y1="351.9" x2="437.4" y2="427.7" stroke="#e2e5ea" stroke-width="0.6"/>
<line x1="437.4" y1="427.7" x2="437.4" y2="430.2" stroke="#9a9da4" stroke-width="0.6"/>
<text x="437.4" y="434.9" font-size="5.6" text-anchor="middle" fill="#6e7079">16:44</text>
<line x1="468" y1="351.9" x2="468" y2="427.7" stroke="#e2e5ea" stroke-width="0.6"/>
<line x1="468" y1="427.7" x2="468" y2="430.2" stroke="#9a9da4" stroke-width="0.6"/>
<text x="468" y="434.9" font-size="5.6" text-anchor="middle" fill="#6e7079">16:45</text>
<line x1="498.6" y1="351.9" x2="498.6" y2="427.7" stroke="#e2e5ea" stroke-width="0.6"/>
<line x1="498.6" y1="427.7" x2="498.6" y2="430.2" stroke="#9a9da4" stroke-width="0.6"/>
<text x="498.6" y="434.9" font-size="5.6" text-anchor="middle" fill="#6e7079">16:46</text>
<line x1="529.2" y1="351.9" x2="529.2" y2="427.7" stroke="#e2e5ea" stroke-width="0.6"/>
<line x1="529.2" y1="427.7" x2="529.2" y2="430.2" stroke="#9a9da4" stroke-width="0.6"/>
<text x="529.2" y="434.9" font-size="5.6" text-anchor="middle" fill="#6e7079">16:47</text>
<line x1="559.8" y1="351.9" x2="559.8" y2="427.7" stroke="#e2e5ea" stroke-width="0.6"/>
<line x1="559.8" y1="427.7" x2="559.8" y2="430.2" stroke="#9a9da4" stroke-width="0.6"/>
<text x="559.8" y="434.9" font-size="5.6" text-anchor="middle" fill="#6e7079">16:48</text>
<line x1="578.3" y1="351.9" x2="578.3" y2="427.7" stroke="#e2e5ea" stroke-width="0.6"/>
<line x1="428.2" y1="351.9" x2="428.2" y2="427.7" stroke="#9a9da4" stroke-width="0.65"/>
<line x1="428.2" y1="427.7" x2="578.3" y2="427.7" stroke="#9a9da4" stroke-width="0.65"/>
<polyline points="428.2,402.08 430.74,378.61 433.29,389.38 435.83,375.19 438.38,374.22 440.92,363.45 443.46,372.73 446.01,399.14 448.55,401.59 451.1,378.61 453.64,399.14 456.18,372.73 458.73,374.22 461.27,375.67 463.82,391.8 466.36,392.29 468.91,386.43 471.45,388.89 473.99,383.49 476.54,378.61 479.08,389.38 481.63,399.62 484.17,378.61 486.71,385.43 489.26,362.97 491.8,373.7 494.35,372.73 496.89,372.73 499.43,386.43 501.98,373.21 504.52,386.43 507.07,389.86 509.61,362.45 512.15,388.37 514.7,391.32 517.24,371.76 519.79,371.76 522.33,371.76 524.87,401.59 527.42,401.59 529.96,362.45 532.51,398.65 535.05,372.24 537.59,401.59 540.14,375.19 542.68,376.64 545.23,373.7 547.77,372.73 550.32,385.95 552.86,361.97 555.4,361.97 557.95,372.73 560.49,362.45 563.04,370.79 565.58,401.59 568.12,388.37 570.67,373.7 573.21,377.13 575.76,377.13 578.3,373.7" fill="none" stroke="#4aa6ee" stroke-width="1.3" stroke-linejoin="round"/>
<circle cx="578.3" cy="350" r="5.6" fill="#fff" stroke="#e8ebef" stroke-width="0.7"/>
<path d="M575.7,349.2 L575.7,347.7 L577.2,347.7" fill="none" stroke="#555" stroke-width="0.85"/>
<path d="M575.7,351.2 L575.7,352.7 L577.2,352.7" fill="none" stroke="#555" stroke-width="0.85"/>
<path d="M580.9,349.2 L580.9,347.7 L579.4,347.7" fill="none" stroke="#555" stroke-width="0.85"/>
<path d="M580.9,351.2 L580.9,352.7 L579.4,352.7" fill="none" stroke="#555" stroke-width="0.85"/>
<line x1="450.3" y1="446" x2="457.9" y2="446" stroke="#4aa6ee" stroke-width="1.3"/>
<circle cx="454.1" cy="446" r="1.9" fill="#fff" stroke="#4aa6ee" stroke-width="1.2"/>
<text x="460" y="447.87" font-size="5.2" fill="#555">Device Factory - partsProduced</text>
<rect x="429.7" y="454.3" width="150.8" height="4" fill="#80c0f5"/>
<rect x="429.7" y="458.3" width="150.8" height="8.3" fill="#e4f2fd"/>
<polygon points="429.7,466.6 429.7,465.04 432.26,462.01 434.81,463.4 437.37,461.57 439.92,461.44 442.48,460.05 445.04,461.25 447.59,464.66 450.15,464.98 452.7,462.01 455.26,464.66 457.82,461.25 460.37,461.44 462.93,461.63 465.48,463.71 468.04,463.78 470.59,463.02 473.15,463.34 475.71,462.64 478.26,462.01 480.82,463.4 483.37,464.73 485.93,462.01 488.49,462.89 491.04,459.99 493.6,461.37 496.15,461.25 498.71,461.25 501.27,463.02 503.82,461.31 506.38,463.02 508.93,463.46 511.49,459.92 514.05,463.27 516.6,463.65 519.16,461.12 521.71,461.12 524.27,461.12 526.83,464.98 529.38,464.98 531.94,459.92 534.49,464.6 537.05,461.19 539.61,464.98 542.16,461.57 544.72,461.75 547.27,461.37 549.83,461.25 552.38,462.96 554.94,459.86 557.5,459.86 560.05,461.25 562.61,459.92 565.16,461 567.72,464.98 570.28,463.27 572.83,461.37 575.39,461.82 577.94,461.82 580.5,461.37 580.5,466.6" fill="#d6ebfb"/>
<polyline points="429.7,465.04 432.26,462.01 434.81,463.4 437.37,461.57 439.92,461.44 442.48,460.05 445.04,461.25 447.59,464.66 450.15,464.98 452.7,462.01 455.26,464.66 457.82,461.25 460.37,461.44 462.93,461.63 465.48,463.71 468.04,463.78 470.59,463.02 473.15,463.34 475.71,462.64 478.26,462.01 480.82,463.4 483.37,464.73 485.93,462.01 488.49,462.89 491.04,459.99 493.6,461.37 496.15,461.25 498.71,461.25 501.27,463.02 503.82,461.31 506.38,463.02 508.93,463.46 511.49,459.92 514.05,463.27 516.6,463.65 519.16,461.12 521.71,461.12 524.27,461.12 526.83,464.98 529.38,464.98 531.94,459.92 534.49,464.6 537.05,461.19 539.61,464.98 542.16,461.57 544.72,461.75 547.27,461.37 549.83,461.25 552.38,462.96 554.94,459.86 557.5,459.86 560.05,461.25 562.61,459.92 565.16,461 567.72,464.98 570.28,463.27 572.83,461.37 575.39,461.82 577.94,461.82 580.5,461.37" fill="none" stroke="#5ea3e2" stroke-width="0.9"/>
<rect x="428.5" y="459.1" width="2.4" height="6.7" rx="1.2" fill="#1e88e5"/>
<rect x="579.3" y="459.1" width="2.4" height="6.7" rx="1.2" fill="#1e88e5"/>
<rect x="503.6" y="455.9" width="3" height="0.8" fill="#e8f3fd"/>
<line x1="630.2" y1="427.7" x2="632.7" y2="427.7" stroke="#9a9da4" stroke-width="0.6"/>
<text x="628.7" y="429.72" font-size="5.6" text-anchor="end" fill="#6e7079">0</text>
<line x1="632.7" y1="412.54" x2="791" y2="412.54" stroke="#e2e5ea" stroke-width="0.6"/>
<line x1="630.2" y1="412.54" x2="632.7" y2="412.54" stroke="#9a9da4" stroke-width="0.6"/>
<text x="628.7" y="414.56" font-size="5.6" text-anchor="end" fill="#6e7079">10</text>
<line x1="632.7" y1="397.38" x2="791" y2="397.38" stroke="#e2e5ea" stroke-width="0.6"/>
<line x1="630.2" y1="397.38" x2="632.7" y2="397.38" stroke="#9a9da4" stroke-width="0.6"/>
<text x="628.7" y="399.4" font-size="5.6" text-anchor="end" fill="#6e7079">20</text>
<line x1="632.7" y1="382.22" x2="791" y2="382.22" stroke="#e2e5ea" stroke-width="0.6"/>
<line x1="630.2" y1="382.22" x2="632.7" y2="382.22" stroke="#9a9da4" stroke-width="0.6"/>
<text x="628.7" y="384.24" font-size="5.6" text-anchor="end" fill="#6e7079">30</text>
<line x1="632.7" y1="367.06" x2="791" y2="367.06" stroke="#e2e5ea" stroke-width="0.6"/>
<line x1="630.2" y1="367.06" x2="632.7" y2="367.06" stroke="#9a9da4" stroke-width="0.6"/>
<text x="628.7" y="369.08" font-size="5.6" text-anchor="end" fill="#6e7079">40</text>
<line x1="632.7" y1="351.9" x2="791" y2="351.9" stroke="#e2e5ea" stroke-width="0.6"/>
<line x1="630.2" y1="351.9" x2="632.7" y2="351.9" stroke="#9a9da4" stroke-width="0.6"/>
<text x="628.7" y="353.92" font-size="5.6" text-anchor="end" fill="#6e7079">50</text>
<line x1="642.4" y1="351.9" x2="642.4" y2="427.7" stroke="#e2e5ea" stroke-width="0.6"/>
<line x1="642.4" y1="427.7" x2="642.4" y2="430.2" stroke="#9a9da4" stroke-width="0.6"/>
<text x="642.4" y="434.9" font-size="5.6" text-anchor="middle" fill="#6e7079">16:44</text>
<line x1="674.2" y1="351.9" x2="674.2" y2="427.7" stroke="#e2e5ea" stroke-width="0.6"/>
<line x1="674.2" y1="427.7" x2="674.2" y2="430.2" stroke="#9a9da4" stroke-width="0.6"/>
<text x="674.2" y="434.9" font-size="5.6" text-anchor="middle" fill="#6e7079">16:45</text>
<line x1="706" y1="351.9" x2="706" y2="427.7" stroke="#e2e5ea" stroke-width="0.6"/>
<line x1="706" y1="427.7" x2="706" y2="430.2" stroke="#9a9da4" stroke-width="0.6"/>
<text x="706" y="434.9" font-size="5.6" text-anchor="middle" fill="#6e7079">16:46</text>
<line x1="737.8" y1="351.9" x2="737.8" y2="427.7" stroke="#e2e5ea" stroke-width="0.6"/>
<line x1="737.8" y1="427.7" x2="737.8" y2="430.2" stroke="#9a9da4" stroke-width="0.6"/>
<text x="737.8" y="434.9" font-size="5.6" text-anchor="middle" fill="#6e7079">16:47</text>
<line x1="769.6" y1="351.9" x2="769.6" y2="427.7" stroke="#e2e5ea" stroke-width="0.6"/>
<line x1="769.6" y1="427.7" x2="769.6" y2="430.2" stroke="#9a9da4" stroke-width="0.6"/>
<text x="769.6" y="434.9" font-size="5.6" text-anchor="middle" fill="#6e7079">16:48</text>
<line x1="791" y1="351.9" x2="791" y2="427.7" stroke="#e2e5ea" stroke-width="0.6"/>
<line x1="632.7" y1="351.9" x2="632.7" y2="427.7" stroke="#9a9da4" stroke-width="0.65"/>
<line x1="632.7" y1="427.7" x2="791" y2="427.7" stroke="#9a9da4" stroke-width="0.65"/>
<polyline points="632.7,375.4 635.39,396.17 638.08,382.67 640.78,379.04 643.47,377.22 646.16,379.04 648.85,375.09 651.55,397.08 654.24,387.68 656.93,396.17 659.62,397.53 662.32,375.09 665.01,377.22 667.7,364.18 670.39,400.72 673.09,400.72 675.78,391.62 678.47,382.67 681.16,388.13 683.86,395.71 686.55,382.67 689.24,405.11 691.93,397.08 694.62,392.53 697.32,378.13 700.01,377.67 702.7,375.85 705.39,376.16 708.09,381.77 710.78,376.46 713.47,382.22 716.16,387.98 718.86,376.91 721.55,381.77 724.24,400.56 726.93,374.64 729.63,374.64 732.32,374.64 735.01,386.16 737.7,376 740.39,376.46 743.09,404.96 745.78,375.09 748.47,376 751.16,364.33 753.86,396.02 756.55,377.82 759.24,376.46 761.93,380.4 764.63,376.91 767.32,376.46 770.01,377.82 772.7,376.46 775.4,377.82 778.09,376.46 780.78,387.98 783.47,377.82 786.17,396.02 788.86,396.02 791.55,378.28" fill="none" stroke="#4aa6ee" stroke-width="1.3" stroke-linejoin="round"/>
<circle cx="791" cy="350" r="5.6" fill="#fff" stroke="#e8ebef" stroke-width="0.7"/>
<path d="M788.4,349.2 L788.4,347.7 L789.9,347.7" fill="none" stroke="#555" stroke-width="0.85"/>
<path d="M788.4,351.2 L788.4,352.7 L789.9,352.7" fill="none" stroke="#555" stroke-width="0.85"/>
<path d="M793.6,349.2 L793.6,347.7 L792.1,347.7" fill="none" stroke="#555" stroke-width="0.85"/>
<path d="M793.6,351.2 L793.6,352.7 L792.1,352.7" fill="none" stroke="#555" stroke-width="0.85"/>
<line x1="662.6" y1="446" x2="670.2" y2="446" stroke="#4aa6ee" stroke-width="1.3"/>
<circle cx="666.4" cy="446" r="1.9" fill="#fff" stroke="#4aa6ee" stroke-width="1.2"/>
<text x="672.3" y="447.87" font-size="5.2" fill="#555">Device Factory - defectiveParts</text>
<rect x="634.2" y="454.3" width="159" height="4" fill="#80c0f5"/>
<rect x="634.2" y="458.3" width="159" height="8.3" fill="#e4f2fd"/>
<polygon points="634.2,466.6 634.2,461.28 636.89,463.91 639.59,462.2 642.28,461.74 644.98,461.51 647.67,461.74 650.37,461.24 653.06,464.03 655.76,462.83 658.45,463.91 661.15,464.08 663.84,461.24 666.54,461.51 669.23,459.86 671.93,464.49 674.62,464.49 677.32,463.33 680.01,462.2 682.71,462.89 685.4,463.85 688.1,462.2 690.79,465.04 693.49,464.03 696.18,463.45 698.88,461.62 701.57,461.57 704.27,461.34 706.96,461.37 709.66,462.08 712.35,461.41 715.05,462.14 717.74,462.87 720.44,461.47 723.13,462.08 725.83,464.47 728.52,461.18 731.22,461.18 733.91,461.18 736.61,462.64 739.3,461.35 742,461.41 744.69,465.02 747.39,461.24 750.08,461.35 752.78,459.88 755.47,463.89 758.17,461.59 760.86,461.41 763.56,461.91 766.25,461.47 768.95,461.41 771.64,461.59 774.34,461.41 777.03,461.59 779.73,461.41 782.42,462.87 785.12,461.59 787.81,463.89 790.51,463.89 793.2,461.64 793.2,466.6" fill="#d6ebfb"/>
<polyline points="634.2,461.28 636.89,463.91 639.59,462.2 642.28,461.74 644.98,461.51 647.67,461.74 650.37,461.24 653.06,464.03 655.76,462.83 658.45,463.91 661.15,464.08 663.84,461.24 666.54,461.51 669.23,459.86 671.93,464.49 674.62,464.49 677.32,463.33 680.01,462.2 682.71,462.89 685.4,463.85 688.1,462.2 690.79,465.04 693.49,464.03 696.18,463.45 698.88,461.62 701.57,461.57 704.27,461.34 706.96,461.37 709.66,462.08 712.35,461.41 715.05,462.14 717.74,462.87 720.44,461.47 723.13,462.08 725.83,464.47 728.52,461.18 731.22,461.18 733.91,461.18 736.61,462.64 739.3,461.35 742,461.41 744.69,465.02 747.39,461.24 750.08,461.35 752.78,459.88 755.47,463.89 758.17,461.59 760.86,461.41 763.56,461.91 766.25,461.47 768.95,461.41 771.64,461.59 774.34,461.41 777.03,461.59 779.73,461.41 782.42,462.87 785.12,461.59 787.81,463.89 790.51,463.89 793.2,461.64" fill="none" stroke="#5ea3e2" stroke-width="0.9"/>
<rect x="633" y="459.1" width="2.4" height="6.7" rx="1.2" fill="#1e88e5"/>
<rect x="792" y="459.1" width="2.4" height="6.7" rx="1.2" fill="#1e88e5"/>
<rect x="712.2" y="455.9" width="3" height="0.8" fill="#e8f3fd"/>
<line x1="853.3" y1="427.7" x2="855.8" y2="427.7" stroke="#9a9da4" stroke-width="0.6"/>
<text x="851.8" y="429.72" font-size="5.6" text-anchor="end" fill="#6e7079">0</text>
<line x1="855.8" y1="416.87" x2="1002.4" y2="416.87" stroke="#e2e5ea" stroke-width="0.6"/>
<line x1="853.3" y1="416.87" x2="855.8" y2="416.87" stroke="#9a9da4" stroke-width="0.6"/>
<text x="851.8" y="418.89" font-size="5.6" text-anchor="end" fill="#6e7079">5,000</text>
<line x1="855.8" y1="406.04" x2="1002.4" y2="406.04" stroke="#e2e5ea" stroke-width="0.6"/>
<line x1="853.3" y1="406.04" x2="855.8" y2="406.04" stroke="#9a9da4" stroke-width="0.6"/>
<text x="851.8" y="408.06" font-size="5.6" text-anchor="end" fill="#6e7079">10,000</text>
<line x1="855.8" y1="395.21" x2="1002.4" y2="395.21" stroke="#e2e5ea" stroke-width="0.6"/>
<line x1="853.3" y1="395.21" x2="855.8" y2="395.21" stroke="#9a9da4" stroke-width="0.6"/>
<text x="851.8" y="397.23" font-size="5.6" text-anchor="end" fill="#6e7079">15,000</text>
<line x1="855.8" y1="384.39" x2="1002.4" y2="384.39" stroke="#e2e5ea" stroke-width="0.6"/>
<line x1="853.3" y1="384.39" x2="855.8" y2="384.39" stroke="#9a9da4" stroke-width="0.6"/>
<text x="851.8" y="386.4" font-size="5.6" text-anchor="end" fill="#6e7079">20,000</text>
<line x1="855.8" y1="373.56" x2="1002.4" y2="373.56" stroke="#e2e5ea" stroke-width="0.6"/>
<line x1="853.3" y1="373.56" x2="855.8" y2="373.56" stroke="#9a9da4" stroke-width="0.6"/>
<text x="851.8" y="375.57" font-size="5.6" text-anchor="end" fill="#6e7079">25,000</text>
<line x1="855.8" y1="362.73" x2="1002.4" y2="362.73" stroke="#e2e5ea" stroke-width="0.6"/>
<line x1="853.3" y1="362.73" x2="855.8" y2="362.73" stroke="#9a9da4" stroke-width="0.6"/>
<text x="851.8" y="364.74" font-size="5.6" text-anchor="end" fill="#6e7079">30,000</text>
<line x1="855.8" y1="351.9" x2="1002.4" y2="351.9" stroke="#e2e5ea" stroke-width="0.6"/>
<line x1="853.3" y1="351.9" x2="855.8" y2="351.9" stroke="#9a9da4" stroke-width="0.6"/>
<text x="851.8" y="353.92" font-size="5.6" text-anchor="end" fill="#6e7079">35,000</text>
<line x1="864.5" y1="351.9" x2="864.5" y2="427.7" stroke="#e2e5ea" stroke-width="0.6"/>
<line x1="864.5" y1="427.7" x2="864.5" y2="430.2" stroke="#9a9da4" stroke-width="0.6"/>
<text x="864.5" y="434.9" font-size="5.6" text-anchor="middle" fill="#6e7079">16:44</text>
<line x1="894.3" y1="351.9" x2="894.3" y2="427.7" stroke="#e2e5ea" stroke-width="0.6"/>
<line x1="894.3" y1="427.7" x2="894.3" y2="430.2" stroke="#9a9da4" stroke-width="0.6"/>
<text x="894.3" y="434.9" font-size="5.6" text-anchor="middle" fill="#6e7079">16:45</text>
<line x1="924.1" y1="351.9" x2="924.1" y2="427.7" stroke="#e2e5ea" stroke-width="0.6"/>
<line x1="924.1" y1="427.7" x2="924.1" y2="430.2" stroke="#9a9da4" stroke-width="0.6"/>
<text x="924.1" y="434.9" font-size="5.6" text-anchor="middle" fill="#6e7079">16:46</text>
<line x1="953.9" y1="351.9" x2="953.9" y2="427.7" stroke="#e2e5ea" stroke-width="0.6"/>
<line x1="953.9" y1="427.7" x2="953.9" y2="430.2" stroke="#9a9da4" stroke-width="0.6"/>
<text x="953.9" y="434.9" font-size="5.6" text-anchor="middle" fill="#6e7079">16:47</text>
<line x1="983.7" y1="351.9" x2="983.7" y2="427.7" stroke="#e2e5ea" stroke-width="0.6"/>
<line x1="983.7" y1="427.7" x2="983.7" y2="430.2" stroke="#9a9da4" stroke-width="0.6"/>
<text x="983.7" y="434.9" font-size="5.6" text-anchor="middle" fill="#6e7079">16:48</text>
<line x1="1002.4" y1="351.9" x2="1002.4" y2="427.7" stroke="#e2e5ea" stroke-width="0.6"/>
<line x1="855.8" y1="351.9" x2="855.8" y2="427.7" stroke="#9a9da4" stroke-width="0.65"/>
<line x1="855.8" y1="427.7" x2="1002.4" y2="427.7" stroke="#9a9da4" stroke-width="0.65"/>
<polyline points="855.8,370.57 858.3,408.58 860.79,383.91 863.29,399.91 865.78,369.24 868.28,363.24 870.77,384.57 873.27,381.91 875.77,387.91 878.26,407.91 880.76,381.91 883.25,384.57 885.75,369.9 888.24,406.85 890.74,391.24 893.24,390.58 895.73,367.24 898.23,355.9 900.72,382.57 903.22,407.91 905.72,355.9 908.21,408.58 910.71,408.58 913.2,366.57 915.7,363.24 918.19,369.9 920.69,398.58 923.19,399.24 925.68,405.91 928.18,399.24 930.67,405.91 933.17,395.24 935.66,362.57 938.16,355.24 940.66,389.91 943.15,384.57 945.65,384.57 948.14,384.57 950.64,387.91 953.13,370.57 955.63,362.57 958.13,407.91 960.62,385.24 963.12,370.57 965.61,405.91 968.11,407.25 970.61,399.91 973.1,399.24 975.6,405.25 978.09,362.57 980.59,361.9 983.08,368.57 985.58,361.9 988.08,368.57 990.57,370.57 993.07,391.91 995.56,369.24 998.06,407.25 1000.55,407.25 1003.05,399.24" fill="none" stroke="#4aa6ee" stroke-width="1.3" stroke-linejoin="round"/>
<circle cx="1002.4" cy="350" r="5.6" fill="#fff" stroke="#e8ebef" stroke-width="0.7"/>
<path d="M999.8,349.2 L999.8,347.7 L1001.3,347.7" fill="none" stroke="#555" stroke-width="0.85"/>
<path d="M999.8,351.2 L999.8,352.7 L1001.3,352.7" fill="none" stroke="#555" stroke-width="0.85"/>
<path d="M1005,349.2 L1005,347.7 L1003.5,347.7" fill="none" stroke="#555" stroke-width="0.85"/>
<path d="M1005,351.2 L1005,352.7 L1003.5,352.7" fill="none" stroke="#555" stroke-width="0.85"/>
<line x1="873.4" y1="446" x2="881" y2="446" stroke="#4aa6ee" stroke-width="1.3"/>
<circle cx="877.2" cy="446" r="1.9" fill="#fff" stroke="#4aa6ee" stroke-width="1.2"/>
<text x="883.1" y="447.87" font-size="5.2" fill="#555">Device Factory - uptimeSeconds</text>
<rect x="857.3" y="454.3" width="147.3" height="4" fill="#80c0f5"/>
<rect x="857.3" y="458.3" width="147.3" height="8.3" fill="#e4f2fd"/>
<polygon points="857.3,466.6 857.3,461.35 859.8,465.04 862.29,462.64 864.79,464.2 867.29,461.22 869.78,460.63 872.28,462.71 874.78,462.45 877.27,463.03 879.77,464.98 882.27,462.45 884.76,462.71 887.26,461.28 889.76,464.88 892.25,463.36 894.75,463.29 897.25,461.02 899.74,459.92 902.24,462.51 904.74,464.98 907.23,459.92 909.73,465.04 912.23,465.04 914.72,460.96 917.22,460.63 919.72,461.28 922.21,464.07 924.71,464.14 927.21,464.78 929.7,464.14 932.2,464.78 934.69,463.75 937.19,460.57 939.69,459.86 942.18,463.23 944.68,462.71 947.18,462.71 949.67,462.71 952.17,463.03 954.67,461.35 957.16,460.57 959.66,464.98 962.16,462.77 964.65,461.35 967.15,464.78 969.65,464.91 972.14,464.2 974.64,464.14 977.14,464.72 979.63,460.57 982.13,460.5 984.63,461.15 987.12,460.5 989.62,461.15 992.12,461.35 994.61,463.42 997.11,461.22 999.61,464.91 1002.1,464.91 1004.6,464.14 1004.6,466.6" fill="#d6ebfb"/>
<polyline points="857.3,461.35 859.8,465.04 862.29,462.64 864.79,464.2 867.29,461.22 869.78,460.63 872.28,462.71 874.78,462.45 877.27,463.03 879.77,464.98 882.27,462.45 884.76,462.71 887.26,461.28 889.76,464.88 892.25,463.36 894.75,463.29 897.25,461.02 899.74,459.92 902.24,462.51 904.74,464.98 907.23,459.92 909.73,465.04 912.23,465.04 914.72,460.96 917.22,460.63 919.72,461.28 922.21,464.07 924.71,464.14 927.21,464.78 929.7,464.14 932.2,464.78 934.69,463.75 937.19,460.57 939.69,459.86 942.18,463.23 944.68,462.71 947.18,462.71 949.67,462.71 952.17,463.03 954.67,461.35 957.16,460.57 959.66,464.98 962.16,462.77 964.65,461.35 967.15,464.78 969.65,464.91 972.14,464.2 974.64,464.14 977.14,464.72 979.63,460.57 982.13,460.5 984.63,461.15 987.12,460.5 989.62,461.15 992.12,461.35 994.61,463.42 997.11,461.22 999.61,464.91 1002.1,464.91 1004.6,464.14" fill="none" stroke="#5ea3e2" stroke-width="0.9"/>
<rect x="856.1" y="459.1" width="2.4" height="6.7" rx="1.2" fill="#1e88e5"/>
<rect x="1003.4" y="459.1" width="2.4" height="6.7" rx="1.2" fill="#1e88e5"/>
<rect x="929.45" y="455.9" width="3" height="0.8" fill="#e8f3fd"/>
</svg></body></html>
